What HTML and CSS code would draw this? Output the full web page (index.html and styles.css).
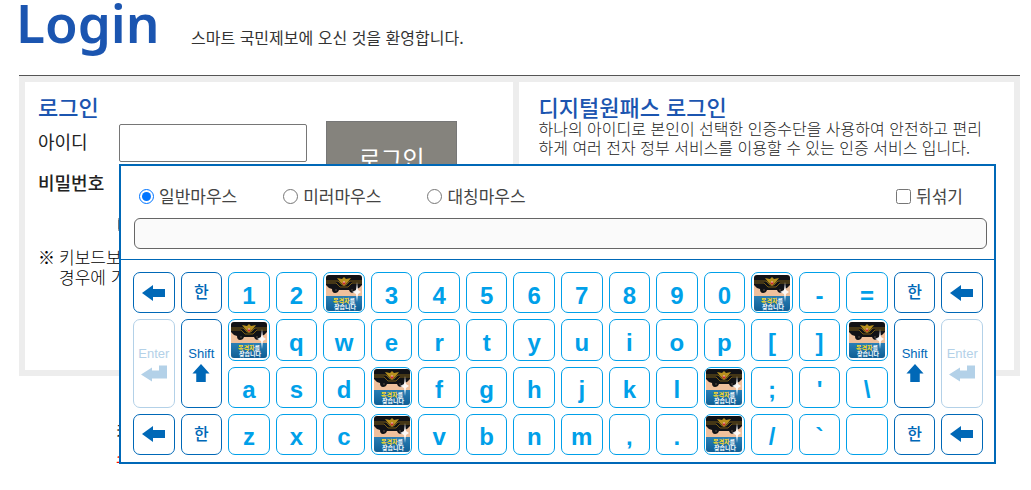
FILE: index.html
```html
<!DOCTYPE html>
<html lang="ko">
<head>
<meta charset="utf-8">
<title>로그인</title>
<link rel="stylesheet" href="styles.css">
</head>
<body>
<svg class="defs" width="0" height="0" aria-hidden="true">
  <defs>
    <linearGradient id="sea" x1="0" y1="0" x2="0" y2="1"><stop offset="0" stop-color="#2a7fb5"/><stop offset="1" stop-color="#0f5f96"/></linearGradient>
    <clipPath id="badge-clip"><rect width="36" height="36" rx="3"/></clipPath>
    <symbol id="badge" viewBox="0 0 36 36">
      <g clip-path="url(#badge-clip)">
        <rect width="36" height="36" fill="#efc09c"/>
        <path d="M0 0h36v10q-2 3-6 4 0 4-3 4-3 0-4-3H13q-1 3-4 3-3 0-3-4Q2 13 0 10z" fill="#111216"/>
        <path d="M0 6h12l4 4h4l4-4h12M0 8h10l4 4h8l4-4h10" fill="none" stroke="#a47c18" stroke-width=".7"/>
        <path d="M11 3l5 1 2-2 2 2 5-1-3 4-4 4-4-4z" fill="#b8901e"/>
        <circle cx="18" cy="8" r="1.5" fill="#c62a2d"/><circle cx="18" cy="7" r=".7" fill="#fff"/>
        <circle cx="10" cy="15" r=".8" fill="#66584c"/><circle cx="26" cy="15" r=".8" fill="#66584c"/>
        <rect y="21" width="36" height="15" fill="url(#sea)"/>
        <text class="badge-top" x="7" y="28">목격자<tspan class="badge-white">를</tspan></text>
        <text class="badge-bottom" x="8" y="34">찾습니다</text>
        <path d="M31 7l1 8 3 2-3 2-1 8-1-8-4-2 4-2z" fill="#fff" opacity=".9"/>
      </g>
    </symbol>
    <symbol id="back" viewBox="0 0 24 16"><path d="M0 8L11 0v4h12v8H11v4z" fill="currentColor"/></symbol>
    <symbol id="up" viewBox="0 0 18 20"><path d="M9 0l9 10h-4v9H4v-9H0z" fill="currentColor"/></symbol>
    <symbol id="return" viewBox="0 0 26 16"><path d="M0 9l11-7v3h7V0h8v13H11v3z" fill="currentColor"/></symbol>
  </defs>
</svg>
<header class="header">
  <h1 class="title">Login</h1>
  <p class="welcome">스마트 국민제보에 오신 것을 환영합니다.</p>
</header>
<main class="content">
  <div class="panels">
    <section class="panel">
      <h2 class="heading">로그인</h2>
      <form class="login">
        <div class="fields">
          <label for="uid">아이디</label><input class="box" id="uid" type="text">
          <label class="strong" for="pw">비밀번호</label><input class="box" id="pw" type="password">
          <span></span><input class="save" type="checkbox" aria-label="아이디 저장">
        </div>
        <button class="submit" type="button">로그인</button>
      </form>
      <p class="note"><span>※</span><span>키보드보<br>경우에 가</span></p>
    </section>
    <section class="panel panel-pass">
      <h2 class="heading">디지털원패스 로그인</h2>
      <p class="about">하나의 아이디로 본인이 선택한 인증수단을 사용하여 안전하고 편리<br>하게 여러 전자 정부 서비스를 이용할 수 있는 인증 서비스 입니다.</p>
    </section>
  </div>
  <div class="foot"><p>키</p><p class="alert">소</p></div>
  <section class="keyboard" aria-label="마우스 입력기">
    <div class="modes">
      <label class="mode"><input type="radio" name="mouse" checked>일반마우스</label>
      <label class="mode"><input type="radio" name="mouse">미러마우스</label>
      <label class="mode"><input type="radio" name="mouse">대칭마우스</label>
      <label class="mode shuffle"><input type="checkbox">뒤섞기</label>
    </div>
    <div class="entry"><input class="typed" type="text" aria-label="입력 내용" readonly></div>
    <div class="keys" id="keys"></div>
  </section>
</main>
<script src="keys.js"></script>
</body>
</html>
```
FILE: styles.css
```css
* { box-sizing: border-box; }
body { margin: 0; min-height: 100vh; background: #fff; color: #222; font-family: "Noto Sans CJK KR", sans-serif; }
h1, h2, p { margin: 0; }
button, input { font: inherit; margin: 0; }
.defs { position: absolute; }
.header { display: flex; align-items: flex-start; height: 75px; margin: 0 11px 0 19px; }
.title { width: 172px; margin-left: -3px; font: 600 53px/46px "Noto Sans", sans-serif; color: #1b55b0; }
.welcome { margin-left: 3px; padding-top: 25px; font-size: 16px; line-height: 24px; color: #333; }
.content { position: relative; margin: 0 11px 0 19px; }
.panels { display: grid; grid-template-columns: 488fr 494fr; gap: 6px; min-height: 301px; padding: 6px; border-top: 1px solid #555; background: #ededed; }
.panel { min-width: 0; padding: 11px 13px; background: #fff; }
.panel-pass { padding-left: 19px; }
.heading { font-size: 22px; font-weight: 500; line-height: 26px; color: #1b55b0; }
.login { display: flex; align-items: flex-start; gap: 19px; }
.fields { display: grid; grid-template-columns: 81px 188px; grid-template-rows: 38px 38px 36px; row-gap: 3px; padding-top: 5px; font-size: 18px; line-height: 24px; align-items: center; }
.fields label { padding-bottom: 4px; white-space: nowrap; }
.fields .strong { font-weight: 500; }
.box { width: 100%; height: 38px; border: 1px solid #767676; border-radius: 2px; }
.save { width: 15px; height: 15px; margin-left: -1px; }
.submit { width: 131px; height: 79px; margin-top: 2px; padding: 0 0 6px; border: 1px solid #777; background: #85837d; color: #fff; font-size: 24px; line-height: 28px; }
.note { display: flex; gap: 4px; padding-top: 5px; font-size: 17px; line-height: 20px; font-weight: 300; color: #000; }
.about { font-size: 16px; font-weight: 300; line-height: 19px; white-space: nowrap; }
.foot { padding: 42px 0 0 97px; font-size: 17px; line-height: 25px; min-height: 110px; }
.alert { color: #f00; }
.keyboard { position: absolute; top: 89px; left: 100px; right: 24px; border: 2px solid #0068b7; background: #fff; }
.modes { display: flex; gap: 46px; padding: 18px 31px 10px 18px; }
.mode { display: flex; align-items: center; gap: 5px; font-size: 17px; line-height: 24px; color: #444; }
.mode input { width: 15px; height: 15px; }
.shuffle { margin-left: auto; }
.entry { padding: 0 7px 10px 13px; border-bottom: 1px solid #0068b7; }
.typed { display: block; width: 100%; height: 31px; border: 1px solid #666; border-radius: 6px; background: #fafafa; }
.keys { display: grid; grid-template-columns: repeat(18, 1fr); grid-template-rows: repeat(4, 1fr); gap: 6px; height: 202px; padding: 12px 11px 7px 12px; }
.key { display: flex; align-items: center; justify-content: center; min-width: 0; padding: 6px 0 0; border: 1px solid #00a0e9; border-radius: 7px; background: #fff; color: #00a0e9; font: bold 24px/28px "Liberation Sans", sans-serif; }
.key-photo { padding: 0; }
.key-photo svg { flex: none; width: 36px; height: 36px; }
.key-tool { padding: 0; border-color: #0068b7; color: #0068b7; }
.key-tool svg { width: 24px; height: 16px; }
.key-han { padding: 0 0 3px; border-color: #0068b7; color: #0068b7; font: 500 16px/20px "Noto Sans CJK KR", sans-serif; }
.key-tall { flex-direction: column; gap: 1px; grid-row: span 2; padding: 1px 0 0; border-color: #0068b7; color: #0068b7; font: 13px/18px "Liberation Sans", sans-serif; }
.key-tall svg { width: 26px; height: 19px; }
.key-enter { border-color: #b3d1e8; color: #b3d1e8; }
.badge-top, .badge-bottom { font: bold 6px "Noto Sans CJK KR", sans-serif; fill: #fff; }
.badge-top { fill: #ffdc25; }
.badge-white { fill: #fff; }
```
FILE: keys.js
```javascript
const rows = [
  ["BACK", "HAN", "1", "2", "*", "3", "4", "5", "6", "7", "8", "9", "0", "*", "-", "=", "HAN", "BACK"],
  ["ENTER", "SHIFT", "*", "q", "w", "e", "r", "t", "y", "u", "i", "o", "p", "[", "]", "*", "SHIFT", "ENTER"],
  ["a", "s", "d", "*", "f", "g", "h", "j", "k", "l", "*", ";", "'", "\\"],
  ["BACK", "HAN", "z", "x", "c", "*", "v", "b", "n", "m", ",", ".", "*", "/", "`", " ", "HAN", "BACK"]
];
const icon = (name) => `<svg aria-hidden="true"><use href="#${name}"/></svg>`;
const special = {
  "*": ["key-photo", icon("badge"), "빈 키"],
  BACK: ["key-tool", icon("back"), "지우기"],
  HAN: ["key-han", "한", "한글"],
  SHIFT: ["key-tall", "Shift" + icon("up"), "Shift"],
  ENTER: ["key-tall key-enter", "Enter" + icon("return"), "Enter"]
};
const board = document.getElementById("keys");
rows.flat().forEach((name) => {
  const button = document.createElement("button");
  button.type = "button";
  const entry = special[name];
  button.className = entry ? "key " + entry[0] : "key";
  if (entry) {
    button.innerHTML = entry[1];
    button.setAttribute("aria-label", entry[2]);
  } else {
    button.textContent = name;
  }
  board.append(button);
});
```
